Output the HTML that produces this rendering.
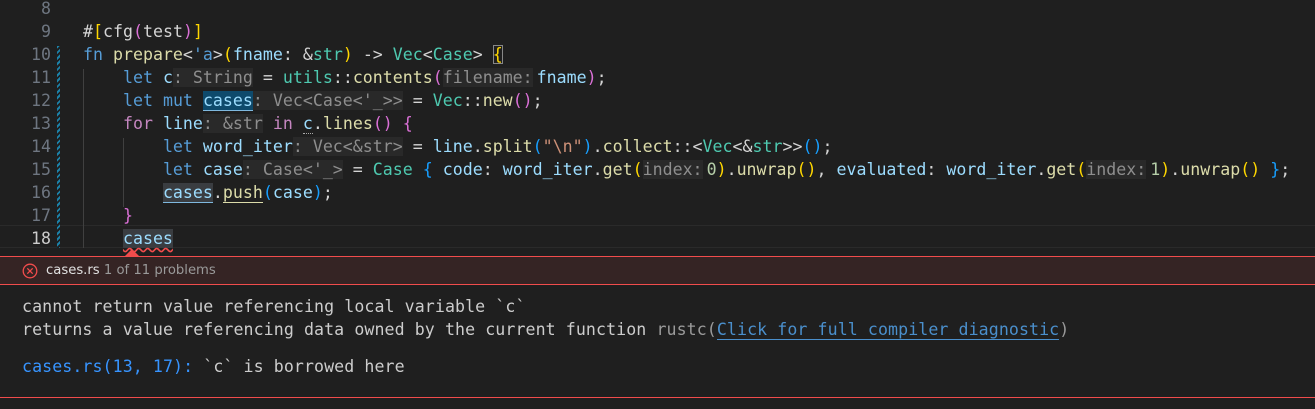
<!DOCTYPE html>
<html><head><meta charset="utf-8"><style>
html,body{margin:0;padding:0;background:#1f1f1f;width:1315px;height:409px;overflow:hidden;position:relative}
.m{font-family:"DejaVu Sans Mono","Liberation Mono",monospace;font-size:16.6px;white-space:pre;color:#cccccc}
.ln{position:absolute;left:0;width:51px;text-align:right;color:#6e7681;line-height:23px}
.code{position:absolute;left:83px;line-height:23px;color:#d4d4d4}
.k{color:#569cd6}.f{color:#dcdcaa}.t{color:#4ec9b0}.v{color:#9cdcfe}.s{color:#ce9178}.c{color:#c586c0}
.y{color:#ffd700}.p{color:#da70d6}.b{color:#179fff}.n{color:#b5cea8}
.h{background:#292929;color:#8e8e8e}
.g{position:absolute;width:1px;background:#404040}
</style></head><body>
<div class="m">
<div style="position:absolute;left:0;right:0;top:225px;height:21px;border-top:1px solid #2a2a2a;border-bottom:1px solid #2a2a2a"></div>
<div style="position:absolute;left:57px;top:46px;width:3px;height:202px;background:repeating-linear-gradient(135deg,#1b81a8 0 2px,#1f1f1f 2px 4px)"></div>
<div class="g" style="left:83px;top:69px;height:179px"></div>
<div class="g" style="left:123px;top:138px;height:69px"></div>
<div class="ln" style="top:-3px">8
9
10
11
12
13
14
15
16
17
<span style="color:#cccccc">18</span></div>
<div class="code" style="top:-3px">
<span style="color:#d4d4d4">#</span><span class="y">[</span>cfg<span class="p">(</span>test<span class="p">)</span><span class="y">]</span>
<span class="k">fn</span> <span class="f">prepare</span>&lt;<span class="k">'a</span>&gt;<span class="y">(</span><span class="v">fname</span>: &amp;<span class="t">str</span><span class="y">)</span> -&gt; <span class="t">Vec</span>&lt;<span class="t">Case</span>&gt; <span class="y" style="outline:1px solid #888;outline-offset:-1px">{</span>
    <span class="k">let</span> <span class="v">c</span><span class="h">: String</span> = <span class="t">utils</span>::<span class="f">contents</span><span class="p">(</span><span class="h" style="margin-right:4px">filename:</span><span class="v">fname</span><span class="p">)</span>;
    <span class="k">let</span> <span class="k">mut</span> <span class="v" style="background:#0e4a6c;border-bottom:1px solid #7fb8de">cases</span><span class="h">: Vec&lt;Case&lt;'_&gt;&gt;</span> = <span class="t">Vec</span>::<span class="f">new</span><span class="p">()</span>;
    <span class="c">for</span> <span class="v">line</span><span class="h">: &amp;str</span> <span class="c">in</span> <span class="v" style="border-bottom:1px dotted #aaa">c</span>.<span class="f">lines</span><span class="p">()</span> <span class="p">{</span>
        <span class="k">let</span> <span class="v">word_iter</span><span class="h">: Vec&lt;&amp;str&gt;</span> = <span class="v">line</span>.<span class="f">split</span><span class="b">(</span><span class="s">"\n"</span><span class="b">)</span>.<span class="f">collect</span>::&lt;<span class="t">Vec</span>&lt;&amp;<span class="t">str</span>&gt;&gt;<span class="b">()</span>;
        <span class="k">let</span> <span class="v">case</span><span class="h">: Case&lt;'_&gt;</span> = <span class="t">Case</span> <span class="b">{</span> <span class="v">code</span>: <span class="v">word_iter</span>.<span class="f">get</span><span class="y">(</span><span class="h" style="margin-right:4px">index:</span><span class="n">0</span><span class="y">)</span>.<span class="f">unwrap</span><span class="y">()</span>, <span class="v">evaluated</span>: <span class="v">word_iter</span>.<span class="f">get</span><span class="y">(</span><span class="h" style="margin-right:4px">index:</span><span class="n">1</span><span class="y">)</span>.<span class="f">unwrap</span><span class="y">()</span> <span class="b">}</span>;
        <span class="v" style="background:#3a3d41;border-bottom:1px solid #7fb8de">cases</span>.<span class="f" style="border-bottom:1px solid #dcdcaa">push</span><span class="b">(</span><span class="v">case</span><span class="b">)</span>;
    <span class="p">}</span>
    <span class="v" style="background:#3a3d41;text-decoration:underline wavy #f14c4c;text-underline-offset:3px">cases</span>
</div>
<div style="position:absolute;left:0;right:0;top:256px;height:1px;background:#f14c4c"></div>
<div style="position:absolute;left:125px;top:249px;width:0;height:0;border-left:7px solid transparent;border-right:7px solid transparent;border-bottom:7px solid #f14c4c"></div>
<div style="position:absolute;left:0;right:0;top:257px;height:27px;background:#352424;border-bottom:1px solid #f14c4c"></div>
<svg style="position:absolute;left:22px;top:263px" width="16" height="16"><circle cx="8" cy="8" r="6.8" fill="none" stroke="#f14c4c" stroke-width="1.3"/><path d="M5.3 5.3L10.7 10.7M10.7 5.3L5.3 10.7" stroke="#f14c4c" stroke-width="1.3"/></svg>
<div style="position:absolute;left:46px;top:263px;font-family:'DejaVu Sans','Liberation Sans',sans-serif;font-size:13.2px;white-space:pre;color:#e0e0e0">cases.rs <span style="color:#9a9a9a">1 of 11 problems</span></div>
<div style="position:absolute;left:22px;top:295px;line-height:23px;color:#cccccc;letter-spacing:0.08px">cannot return value referencing local variable `c`
returns a value referencing data owned by the current function <span style="color:#9a9a9a">rustc(<span style="color:#4a8fcc;border-bottom:1px solid #4a8fcc">Click for full compiler diagnostic</span>)</span></div>
<div style="position:absolute;left:22px;top:355px;line-height:23px;color:#cccccc;letter-spacing:0.08px"><span style="color:#3794ff">cases.rs(13, 17):</span> `c` is borrowed here</div>
<div style="position:absolute;left:0;right:0;top:397px;height:1px;background:#f14c4c"></div>
</div>
</body></html>
